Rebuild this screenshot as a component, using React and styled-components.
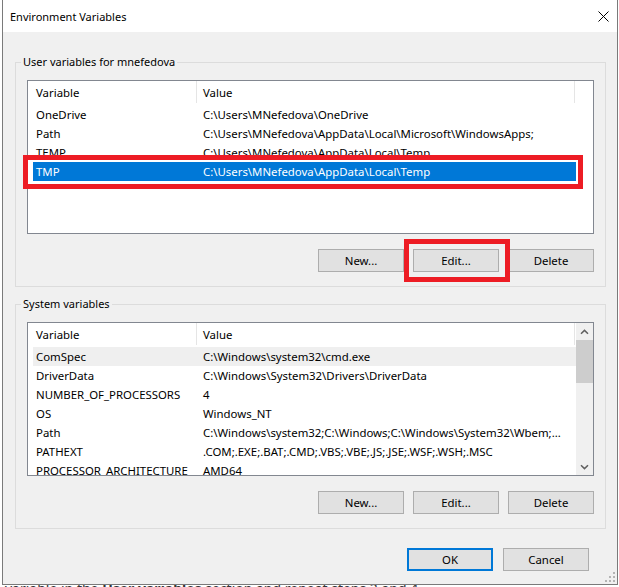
import React from 'react';
import styled, { createGlobalStyle } from 'styled-components';

const FONT = `"Noto Sans", "Open Sans", sans-serif`;

const Global = createGlobalStyle`
  html, body { margin: 0; padding: 0; background: #ffffff; }
  body { font-family: ${FONT}; font-size: 11px; color: #000; }
  * { box-sizing: border-box; }
`;

const Screen = styled.div`
  position: relative;
  width: 619px;
  height: 587px;
  overflow: hidden;
  background: #ffffff;
  display: flex;
  flex-direction: column;
`;

const Window = styled.div`
  position: relative;
  z-index: 1;
  flex: none;
  margin-left: 2px;
  width: 616px;
  height: 585px;
  border: 1px solid #7a7a7a;
  border-top: none;
  display: flex;
  flex-direction: column;
  background: #f0f0f0;
`;

const TitleBar = styled.div`
  height: 32px;
  flex: none;
  background: #ffffff;
  display: flex;
  align-items: center;
  justify-content: space-between;
  padding: 1px 8px 0 7px;
  font-size: 11px;
`;

const CloseIcon = () => (
  <svg width="11" height="11" viewBox="0 0 11 11">
    <path d="M0.5 0.5 L10.5 10.5 M10.5 0.5 L0.5 10.5" stroke="#000" strokeWidth="1" fill="none" />
  </svg>
);

const Body = styled.div`
  flex: 1;
  display: flex;
  flex-direction: column;
  padding: 22px 11px 0 12px;
`;

const Group = styled.fieldset`
  margin: ${p => (p.$first ? '0' : '9px')} 0 0 0;
  padding: 10px 11px 14px 11px;
  border: 1px solid #dcdcdc;
  min-width: 0;
`;

const Legend = styled.legend`
  margin-left: -6px;
  padding: 0 2px;
  line-height: 16px;
  font-size: 11px;
`;

const ListBox = styled.div`
  height: 154px;
  border: 1px solid #828790;
  background: #ffffff;
  display: flex;
  overflow: hidden;
  font-size: 11.4px;
`;

const ListContent = styled.div`
  flex: 1;
  padding-left: 5px;
  overflow: hidden;
`;

const COLS = '164px 378px';

const HeaderRow = styled.div`
  display: grid;
  grid-template-columns: ${COLS};
  height: 24px;
  align-items: start;
`;

const HeaderCell = styled.div`
  height: 22px;
  line-height: 23px;
  padding-left: ${p => (p.$second ? '6px' : '3px')};
  border-right: 1px solid #e5e5e5;
  white-space: nowrap;
  overflow: hidden;
`;

const Row = styled.div`
  display: grid;
  grid-template-columns: ${COLS};
  height: 19px;
  line-height: 19px;
  background: ${p => (p.$selected ? '#0078d7' : p.$hover ? '#efefef' : 'transparent')};
  color: ${p => (p.$selected ? '#ffffff' : '#000000')};
`;

const Cell = styled.div`
  padding-left: ${p => (p.$second ? '6px' : '3px')};
  white-space: nowrap;
  overflow: hidden;
`;

const ScrollBar = styled.div`
  width: 17px;
  flex: none;
  background: ${p => (p.$hidden ? 'transparent' : '#f0f0f0')};
  display: flex;
  flex-direction: column;
`;

const ArrowButton = styled.div`
  height: 17px;
  flex: none;
  display: flex;
  align-items: center;
  justify-content: center;
`;

const Thumb = styled.div`
  height: 43px;
  flex: none;
  background: #cdcdcd;
`;

const Track = styled.div`
  flex: 1;
`;

const Chevron = ({ down }) => (
  <svg width="9" height="6" viewBox="0 0 9 6">
    <path
      d={down ? 'M1 1.2 L4.5 4.6 L8 1.2' : 'M1 4.8 L4.5 1.4 L8 4.8'}
      stroke="#606060"
      strokeWidth="1.5"
      fill="none"
    />
  </svg>
);

const ButtonRow = styled.div`
  display: flex;
  justify-content: flex-end;
  gap: ${p => p.$gap || 9}px;
  margin-top: ${p => p.$top || 15}px;
  margin-right: ${p => p.$right || 0}px;
`;

const Button = styled.button`
  width: 86px;
  height: 23px;
  padding: 0;
  margin: 0;
  background: #e1e1e1;
  border: ${p => (p.$primary ? '2px solid #0078d7' : '1px solid #adadad')};
  font-family: ${FONT};
  font-size: 11.4px;
  color: #000;
  line-height: 1;
`;

const Grip = styled.svg`
  position: absolute;
  right: 1px;
  bottom: 1px;
`;

const Annotation = styled.div`
  position: absolute;
  z-index: 2;
  left: ${p => p.$x}px;
  top: ${p => p.$y}px;
  width: ${p => p.$w}px;
  height: ${p => p.$h}px;
  border: 5px solid #ed1c24;
  pointer-events: none;
`;

const BehindText = styled.p`
  margin: -5px 0 0 0;
  padding-left: 5px;
  font-family: ${FONT};
  font-size: 14px;
  line-height: 18px;
  color: #333;
  white-space: nowrap;
  b { font-weight: 700; }
`;

const userVars = [
  ['OneDrive', 'C:\\Users\\MNefedova\\OneDrive'],
  ['Path', 'C:\\Users\\MNefedova\\AppData\\Local\\Microsoft\\WindowsApps;'],
  ['TEMP', 'C:\\Users\\MNefedova\\AppData\\Local\\Temp'],
  ['TMP', 'C:\\Users\\MNefedova\\AppData\\Local\\Temp'],
];

const systemVars = [
  ['ComSpec', 'C:\\Windows\\system32\\cmd.exe'],
  ['DriverData', 'C:\\Windows\\System32\\Drivers\\DriverData'],
  ['NUMBER_OF_PROCESSORS', '4'],
  ['OS', 'Windows_NT'],
  ['Path', 'C:\\Windows\\system32;C:\\Windows;C:\\Windows\\System32\\Wbem;...'],
  ['PATHEXT', '.COM;.EXE;.BAT;.CMD;.VBS;.VBE;.JS;.JSE;.WSF;.WSH;.MSC'],
  ['PROCESSOR_ARCHITECTURE', 'AMD64'],
];

function VarList({ rows, selected, hover, scroll }) {
  return (
    <ListBox>
      <ListContent>
        <HeaderRow>
          <HeaderCell>Variable</HeaderCell>
          <HeaderCell $second>Value</HeaderCell>
        </HeaderRow>
        {rows.map(([k, v], i) => (
          <Row key={k + i} $selected={i === selected} $hover={i === hover}>
            <Cell>{k}</Cell>
            <Cell $second>{v}</Cell>
          </Row>
        ))}
      </ListContent>
      {scroll ? (
        <ScrollBar>
          <ArrowButton><Chevron /></ArrowButton>
          <Thumb />
          <Track />
          <ArrowButton><Chevron down /></ArrowButton>
        </ScrollBar>
      ) : (
        <ScrollBar $hidden />
      )}
    </ListBox>
  );
}

export default function App() {
  const dots = [
    [9, 1], [9, 5], [5, 5], [9, 9], [5, 9], [1, 9],
  ];
  return (
    <Screen>
      <Global />
      <Window>
        <TitleBar>
          <span>Environment Variables</span>
          <CloseIcon />
        </TitleBar>
        <Body>
          <Group $first>
            <Legend>User variables for mnefedova</Legend>
            <VarList rows={userVars} selected={3} />
            <ButtonRow>
              <Button>New...</Button>
              <Button>Edit...</Button>
              <Button>Delete</Button>
            </ButtonRow>
          </Group>
          <Group>
            <Legend>System variables</Legend>
            <VarList rows={systemVars} hover={0} scroll />
            <ButtonRow>
              <Button>New...</Button>
              <Button>Edit...</Button>
              <Button>Delete</Button>
            </ButtonRow>
          </Group>
          <ButtonRow $top={19} $gap={10} $right={17}>
            <Button $primary>OK</Button>
            <Button>Cancel</Button>
          </ButtonRow>
        </Body>
        <Grip width="12" height="12" viewBox="0 0 12 12">
          {dots.map(([x, y], i) => (
            <rect key={i} x={x} y={y} width="2" height="2" fill="#b4b4b4" />
          ))}
        </Grip>
      </Window>
      <BehindText>
        variable in the <b>User variables</b> section and repeat steps 3 and 4.
      </BehindText>
      <Annotation $x={23} $y={155} $w={560} $h={34} />
      <Annotation $x={404} $y={239} $w={106} $h={43} />
    </Screen>
  );
}
